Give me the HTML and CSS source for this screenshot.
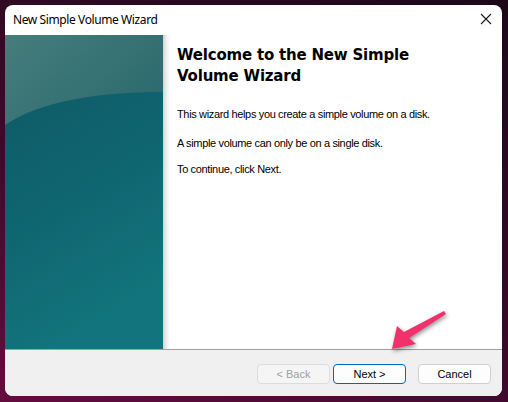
FILE: index.html
```html
<!DOCTYPE html>
<html lang="en">
<head>
  <meta charset="UTF-8">
  <title>New Simple Volume Wizard</title>
  <link rel="stylesheet" href="styles.css">
</head>
<body>

  <div class="window">
    <div class="titlebar">
      <span class="title">New Simple Volume Wizard</span>
      <svg class="close" width="12" height="12" viewBox="0 0 12 12">
        <path d="M1 1 L11 11 M11 1 L1 11" stroke="#1a1a1a" stroke-width="1.1" fill="none"/>
      </svg>
    </div>

    <div class="main">
      <div class="side">
        <svg width="158" height="314" viewBox="0 0 158 314" preserveAspectRatio="none">
          <defs>
            <linearGradient id="deep" x1="0" y1="0" x2="0.3" y2="1">
              <stop offset="0" stop-color="#0e5863"/>
              <stop offset="0.55" stop-color="#0f6470"/>
              <stop offset="1" stop-color="#12747c"/>
            </linearGradient>
            <linearGradient id="gloss" x1="0" y1="0" x2="1" y2="0.6">
              <stop offset="0" stop-color="#457d7b"/>
              <stop offset="1" stop-color="#2e6b6f"/>
            </linearGradient>
          </defs>
          <rect width="158" height="314" fill="url(#deep)"/>
          <path d="M0 0 H158 V57 C95 57 35 66 0 90 Z" fill="url(#gloss)"/>
        </svg>
      </div>
      <div class="edge"></div>
      <div class="content">
        <h1>Welcome to the New Simple Volume Wizard</h1>
        <p class="first">This wizard helps you create a simple volume on a disk.</p>
        <p>A simple volume can only be on a single disk.</p>
        <p>To continue, click Next.</p>
      </div>
    </div>

    <div class="footer">
      <button class="btn" disabled>&lt; Back</button>
      <button class="btn primary">Next &gt;</button>
      <button class="btn cancel">Cancel</button>
    </div>
  </div>

  <!-- callout arrow pointing at Next -->
  <svg class="arrow" width="70" height="50" viewBox="380 305 70 50">
    <polygon points="392,349 397,326 404,332 444,311 446,314 409,338 416,344" fill="#f2316c"/>
  </svg>

</body>
</html>
```

FILE: styles.css
```css
body {
  margin: 0;
  width: 508px;
  height: 402px;
  overflow: hidden;
  background: linear-gradient(25deg, #640c3e 0%, #3a0a2a 45%, #1c0818 100%);
  font-family: "Liberation Sans", Arial, sans-serif;
}

.window {
  margin: 5px 0 0 5px;
  width: 497px;
  height: 391px;
  background-color: #fff;
  border-radius: 8px;
  overflow: hidden;
  display: flex;
  flex-direction: column;
}

.titlebar {
  height: 30px;
  display: flex;
  align-items: center;
  justify-content: space-between;
  padding: 0 10px 0 8px;
  flex-shrink: 0;
}

.title {
  font-family: "Noto Sans", sans-serif;
  font-size: 12px;
  letter-spacing: -0.4px;
  color: #000;
  margin-top: -1px;
}

.close {
  margin-top: -2px;
}

.main {
  height: 314px;
  display: flex;
  border-bottom: 1px solid #a0a0a0;
  flex-shrink: 0;
}

.side {
  width: 158px;
  height: 314px;
  flex-shrink: 0;
}

.side svg {
  display: block;
}

.edge {
  width: 7px;
  flex-shrink: 0;
  background: linear-gradient(to right, #d2d2d2, #ececec 45%, #fff);
}

.content {
  padding: 10px 0 0 7px;
}

h1 {
  font-family: "DejaVu Sans", Verdana, sans-serif;
  font-weight: bold;
  font-size: 15px;
  letter-spacing: -0.2px;
  line-height: 21px;
  margin: 0 0 21px;
  width: 250px;
  color: #000;
}

p {
  font-size: 11px;
  letter-spacing: -0.35px;
  margin: 0 0 13px;
  color: #000;
  line-height: 13px;
}

p.first {
  margin-bottom: 16px;
}

.footer {
  flex: 1;
  background-color: #f0f0f0;
  display: flex;
  justify-content: flex-end;
  align-items: flex-start;
  padding: 14px 11px 0 0;
}

.btn {
  width: 73px;
  height: 20px;
  margin-left: 3px;
  padding: 0;
  font-family: "Liberation Sans", Arial, sans-serif;
  font-size: 11px;
  color: #000;
  background-color: #fdfdfd;
  border: 1px solid #cfcfcf;
  border-radius: 4px;
}

.btn:disabled {
  color: #a0a0a0;
  background-color: #f5f5f5;
  border-color: #dcdcdc;
}

.primary {
  border-color: #0067c0;
}

.cancel {
  margin-left: 12px;
}

.arrow {
  position: absolute;
  left: 380px;
  top: 305px;
  filter: drop-shadow(1px 2px 2px rgba(0, 0, 0, 0.45));
}
```
